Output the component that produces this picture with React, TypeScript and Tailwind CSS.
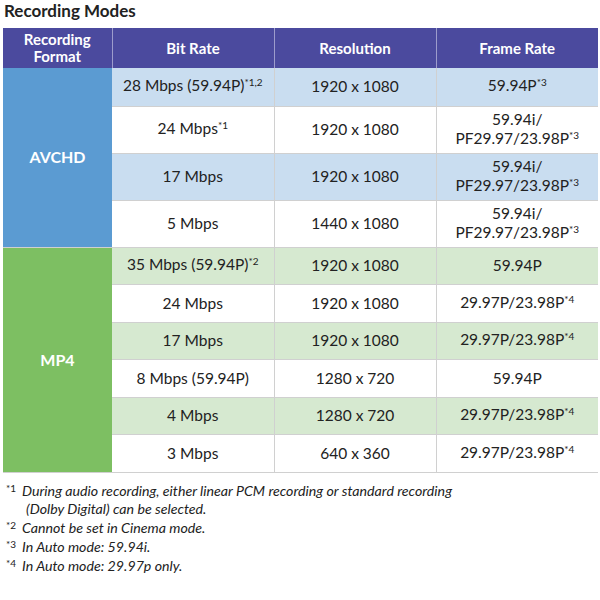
import React from "react"

const font = { fontFamily: "Lato, 'Open Sans', sans-serif" }

type Row = { bit: string; bitSup?: string; res: string; frame: string; frameSup?: string; two?: boolean }

const avchd: Row[] = [
  { bit: "28 Mbps (59.94P)", bitSup: "*1,2", res: "1920 x 1080", frame: "59.94P", frameSup: "*3" },
  { bit: "24 Mbps", bitSup: "*1", res: "1920 x 1080", frame: "PF29.97/23.98P", frameSup: "*3", two: true },
  { bit: "17 Mbps", res: "1920 x 1080", frame: "PF29.97/23.98P", frameSup: "*3", two: true },
  { bit: "5 Mbps", res: "1440 x 1080", frame: "PF29.97/23.98P", frameSup: "*3", two: true },
]

const mp4: Row[] = [
  { bit: "35 Mbps (59.94P)", bitSup: "*2", res: "1920 x 1080", frame: "59.94P" },
  { bit: "24 Mbps", res: "1920 x 1080", frame: "29.97P/23.98P", frameSup: "*4" },
  { bit: "17 Mbps", res: "1920 x 1080", frame: "29.97P/23.98P", frameSup: "*4" },
  { bit: "8 Mbps (59.94P)", res: "1280 x 720", frame: "59.94P" },
  { bit: "4 Mbps", res: "1280 x 720", frame: "29.97P/23.98P", frameSup: "*4" },
  { bit: "3 Mbps", res: "640 x 360", frame: "29.97P/23.98P", frameSup: "*4" },
]

const notes = [
  { mark: "*1", lines: ["During audio recording, either linear PCM recording or standard recording", "(Dolby Digital) can be selected."] },
  { mark: "*2", lines: ["Cannot be set in Cinema mode."] },
  { mark: "*3", lines: ["In Auto mode: 59.94i."] },
  { mark: "*4", lines: ["In Auto mode: 29.97p only."] },
]

function Sup({ t }: { t?: string }) {
  if (!t) return null
  return <span className="text-[10px] relative -top-[5px]">{t}</span>
}

function Group({ name, rows, side, light, rowH }: { name: string; rows: Row[]; side: string; light: string; rowH: string }) {
  return (
    <>
      {rows.map((r, i) => {
        const bg = i % 2 === 0 ? light : "bg-white"
        return (
          <tr key={i} className={r.two ? "h-[47px]" : rowH}>
            {i === 0 && (
              <td rowSpan={rows.length} className={`${side} text-white font-bold text-[16px] text-center border-b border-[#d0d0d0]`}>
                {name}
              </td>
            )}
            <td className={`${bg} text-center border-b border-r border-[#d0d0d0] leading-[19px]`}>
              {r.bit}
              <Sup t={r.bitSup} />
            </td>
            <td className={`${bg} text-center border-b border-r border-[#d0d0d0] leading-[19px]`}>{r.res}</td>
            <td className={`${bg} text-center border-b border-[#d0d0d0] leading-[19px]`}>
              {r.two && (
                <>
                  59.94i/
                  <br />
                </>
              )}
              {r.frame}
              <Sup t={r.frameSup} />
            </td>
          </tr>
        )
      })}
    </>
  )
}

export default function App() {
  return (
    <div className="w-[600px] h-[600px] bg-white text-[#222] overflow-hidden" style={font}>
      <h1 className="text-[17px] font-bold leading-none pl-[4px] pt-[2px] h-[28px]">Recording Modes</h1>
      <table className="ml-[3px] w-[595px] border-collapse text-[15.5px]">
        <colgroup>
          <col className="w-[109px]" />
          <col className="w-[162px]" />
          <col className="w-[162px]" />
          <col className="w-[162px]" />
        </colgroup>
        <thead>
          <tr className="h-[40px] bg-[#4b4a9e] text-white text-[15px] font-bold">
            <th className="leading-[17px] font-bold border-r border-[#9d9ccc]">
              Recording
              <br />
              Format
            </th>
            <th className="font-bold border-r border-[#9d9ccc]">Bit Rate</th>
            <th className="font-bold border-r border-[#9d9ccc]">Resolution</th>
            <th className="font-bold">Frame Rate</th>
          </tr>
        </thead>
        <tbody>
          <Group name="AVCHD" rows={avchd} side="bg-[#5b9bd2]" light="bg-[#c9ddf0]" rowH="h-[38px]" />
          <Group name="MP4" rows={mp4} side="bg-[#7dbf62]" light="bg-[#d6e9d0]" rowH="h-[37.5px]" />
        </tbody>
      </table>
      <div className="mt-[9px] pl-[6px] text-[14.2px] italic leading-[18.8px] text-[#222]">
        {notes.map((n) => (
          <div key={n.mark} className="flex">
            <span className="w-[16px] text-[10px] not-italic relative -top-[3px]">{n.mark}</span>
            <div>
              {n.lines.map((l, i) => (
                <div key={i} className={i > 0 ? "pl-[4px]" : ""}>
                  {l}
                </div>
              ))}
            </div>
          </div>
        ))}
      </div>
    </div>
  )
}
